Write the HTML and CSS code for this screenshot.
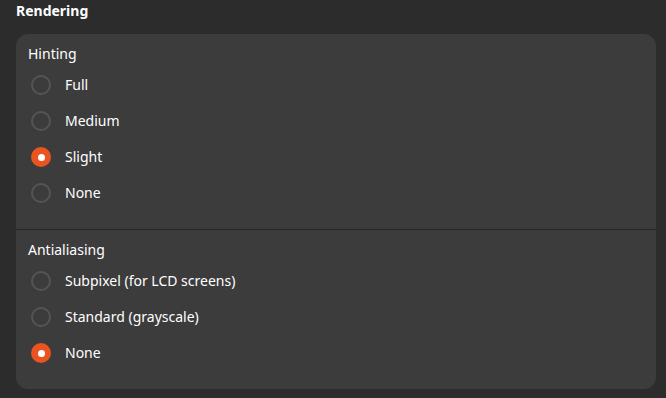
FILE: index.html
```html
<!DOCTYPE html>
<html lang="en">
<head>
    <meta charset="UTF-8">
    <title>Rendering</title>
    <link rel="stylesheet" href="styles.css">
</head>
<body>
    <h2 class="group-title">Rendering</h2>

    <div class="card">
        <div class="section">
            <div class="section-label">Hinting</div>
            <label class="option"><span class="radio"></span>Full</label>
            <label class="option"><span class="radio"></span>Medium</label>
            <label class="option"><span class="radio checked"></span>Slight</label>
            <label class="option"><span class="radio"></span>None</label>
        </div>
        <div class="section">
            <div class="section-label">Antialiasing</div>
            <label class="option"><span class="radio"></span>Subpixel (for LCD screens)</label>
            <label class="option"><span class="radio"></span>Standard (grayscale)</label>
            <label class="option"><span class="radio checked"></span>None</label>
        </div>
    </div>
</body>
</html>
```

FILE: styles.css
```css
body {
    margin: 0;
    padding: 0 10px 0 16px;
    background-color: #2c2c2c;
    color: #ffffff;
    font-family: "Noto Sans", "DejaVu Sans", sans-serif;
    font-size: 14px;
}

.group-title {
    margin: 0;
    height: 34px;
    line-height: 22px;
    font-size: 14px;
    font-weight: bold;
}

.card {
    width: 640px;
    background-color: #3c3c3c;
    border-radius: 12px;
}

.section {
    padding: 10px 12px 18px;
}

.section + .section {
    border-top: 1px solid #282828;
}

.section-label {
    height: 20px;
    line-height: 20px;
    margin-bottom: 3px;
}

.option {
    display: flex;
    align-items: center;
    height: 36px;
    line-height: 34px;
    gap: 14px;
}

.radio {
    box-sizing: border-box;
    width: 20px;
    height: 20px;
    margin-left: 3px;
    border: 2px solid #555555;
    border-radius: 50%;
    display: flex;
    align-items: center;
    justify-content: center;
}

.radio.checked {
    border: none;
    background-color: #e95420;
}

.radio.checked::after {
    content: "";
    width: 7px;
    height: 7px;
    border-radius: 50%;
    background-color: #ffffff;
}
```
